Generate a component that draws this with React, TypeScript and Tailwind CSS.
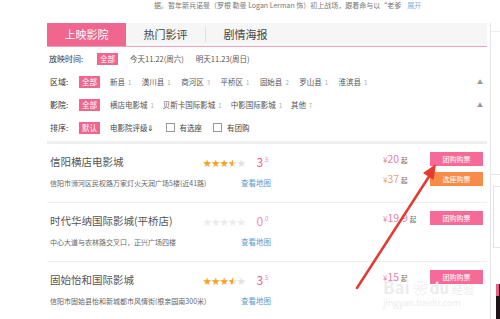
import React from 'react';

interface Price {
  value: string;
  kind: 'group' | 'seat';
}

interface Cinema {
  name: string;
  rating: number;
  score: [string, string];
  address: string;
  prices: Price[];
}

const cinemas: Cinema[] = [
  {
    name: '信阳横店电影城',
    rating: 3.5,
    score: ['3', '.5'],
    address: '信阳市浉河区民权路万家灯火天润广场5楼(近41路)',
    prices: [
      { value: '20', kind: 'group' },
      { value: '37', kind: 'seat' },
    ],
  },
  {
    name: '时代华纳国际影城(平桥店)',
    rating: 0,
    score: ['0', '.0'],
    address: '中心大道与农林路交叉口，正兴广场四楼',
    prices: [{ value: '19.9', kind: 'group' }],
  },
  {
    name: '固始怡和国际影城',
    rating: 3.5,
    score: ['3', '.5'],
    address: '信阳市固始县怡和新城都市风情街(根亲园南300米)',
    prices: [{ value: '15', kind: 'group' }],
  },
];

const areas = [
  ['新县', '1'],
  ['潢川县', '1'],
  ['商河区', '3'],
  ['平桥区', '1'],
  ['固始县', '2'],
  ['罗山县', '1'],
  ['淮滨县', '1'],
];

const brands = [
  ['横店电影城', '1'],
  ['贝斯卡国际影城', '1'],
  ['中影国际影城', '1'],
  ['其他', '7'],
];

const Badge: React.FC<{ text: string }> = ({ text }) => (
  <span className="flex h-[12px] w-[21px] items-center justify-center bg-[#f0668f] text-[7.5px] leading-none text-white">
    {text}
  </span>
);

const Stars: React.FC<{ rating: number }> = ({ rating }) => {
  const empty = rating === 0 ? 'text-[#ececec]' : 'text-[#e2e2e2]';
  return (
    <div className="flex text-[8.5px] leading-none">
      {[0, 1, 2, 3, 4].map((i) => {
        if (rating >= i + 1) {
          return (
            <span key={i} className="text-[#f3a41e]">
              ★
            </span>
          );
        }
        if (rating >= i + 0.5) {
          return (
            <span key={i} className={`relative ${empty}`}>
              ★
              <span className="absolute left-0 top-0 w-1/2 overflow-hidden text-[#f3a41e]">★</span>
            </span>
          );
        }
        return (
          <span key={i} className={empty}>
            ★
          </span>
        );
      })}
    </div>
  );
};

const CinemaRow: React.FC<{ cinema: Cinema; last: boolean }> = ({ cinema, last }) => (
  <div className={`flex h-[59px] pl-[3px] ${last ? '' : 'border-b border-[#eeeeee]'}`}>
    <div className="w-[333px] pt-[11px]">
      <div className="flex h-[14px] items-center">
        <span className="w-[153px] text-[10.5px] leading-none text-[#555]">{cinema.name}</span>
        <Stars rating={cinema.rating} />
        <span className="ml-[11px] flex items-start leading-none text-[#e8608a]">
          <span className={`text-[12px] ${cinema.rating === 0 ? 'text-[#ee8fae]' : ''}`}>{cinema.score[0]}</span>
          <span className="mt-[1px] text-[6px] text-[#ee8fae]">{cinema.score[1]}</span>
        </span>
      </div>
      <div className="mt-[7px] flex h-[14px] items-center">
        <span className="w-[191px] text-[7px] leading-none text-[#666]">{cinema.address}</span>
        <span className="text-[7.5px] leading-none text-[#5c9bd1]">查看地图</span>
      </div>
    </div>
    <div className="flex flex-col gap-[6px] pt-[8px]">
      {cinema.prices.map((p) => (
        <div key={p.value} className="flex h-[14px] items-center">
          <span
            className={`flex w-[47px] items-baseline leading-none ${
              p.kind === 'group' ? 'text-[#e682a3]' : 'text-[#f2a070]'
            }`}
          >
            <span className="text-[8px]">¥</span>
            <span className="text-[10.5px]">{p.value}</span>
            <span className="ml-[2px] text-[6.5px] text-[#666]">起</span>
          </span>
          <span
            className={`flex h-[14px] w-[53px] items-center justify-center text-[7px] leading-none text-white ${
              p.kind === 'group' ? 'bg-[#f66a98]' : 'bg-[#f88b48]'
            }`}
          >
            {p.kind === 'group' ? '团购购票' : '选座购票'}
          </span>
        </div>
      ))}
    </div>
  </div>
);

export default function App() {
  return (
    <div className="relative h-[319px] w-[500px] overflow-hidden bg-white font-['Noto_Sans_CJK_SC','Liberation_Sans',sans-serif]">
      {/* synopsis tail */}
      <div className="flex h-[11px] items-center pl-[154px] text-[7px] leading-none text-[#777]">
        据。暂年新兵诺曼（罗根 勒曼 Logan Lerman 饰）初上战场，跟着命与以“老爹
        <span className="ml-[6px] text-[#7fb0e0]">展开</span>
      </div>

      <div className="mt-[12px] flex">
        <div className="w-[47px]" />
        <div className="w-[440px]">
          {/* tabs */}
          <div className="flex h-[24px] border-b border-[#f0a0b8] bg-[#f6f6f6] text-[11px] leading-none">
            <div className="flex w-[79px] items-center justify-center bg-[#f0668f] text-white">上映影院</div>
            <div className="flex w-[79px] items-center justify-center text-[#444]">热门影评</div>
            <div className="my-[4px] w-px bg-[#e0e0e0]" />
            <div className="flex w-[79px] items-center justify-center text-[#444]">剧情海报</div>
          </div>

          {/* filters */}
          <div className="text-[7.5px] leading-none text-[#555]">
            <div className="flex h-[23px] items-center pl-[2px]">
              <span className="w-[48px] text-[8px] text-[#333]">放映时间:</span>
              <Badge text="全部" />
              <span className="ml-[12px]">今天11.22(周六)</span>
              <span className="ml-[12px]">明天11.23(周日)</span>
            </div>
            <div className="flex h-[23px] items-center pl-[3px] pr-[4px]">
              <span className="w-[29px] text-[8px] text-[#333]">区域:</span>
              <Badge text="全部" />
              <div className="ml-[10px] flex gap-[10.5px]">
                {areas.map(([n, c]) => (
                  <span key={n}>
                    {n}
                    <span className="ml-[3px] text-[6px] text-[#aaa]">{c}</span>
                  </span>
                ))}
              </div>
              <span className="ml-auto text-[6px] text-[#999]">▲</span>
            </div>
            <div className="flex h-[23px] items-center pl-[3px] pr-[4px]">
              <span className="w-[29px] text-[8px] text-[#333]">影院:</span>
              <Badge text="全部" />
              <div className="ml-[10px] flex gap-[9px]">
                {brands.map(([n, c]) => (
                  <span key={n}>
                    {n}
                    <span className="ml-[3px] text-[6px] text-[#aaa]">{c}</span>
                  </span>
                ))}
              </div>
              <span className="ml-auto text-[6px] text-[#999]">▲</span>
            </div>
            <div className="flex h-[23px] items-center pl-[3px]">
              <span className="w-[29px] text-[8px] text-[#333]">排序:</span>
              <Badge text="默认" />
              <span className="ml-[10px] text-[#444]">电影院评级⇓</span>
              <span className="ml-[11px] h-[9px] w-[9px] border border-[#999] bg-white" />
              <span className="ml-[5px] text-[#444]">有选座</span>
              <span className="ml-[11px] h-[9px] w-[9px] border border-[#999] bg-white" />
              <span className="ml-[5px] text-[#444]">有团购</span>
            </div>
          </div>

          <div className="mt-[2px] h-[3px] bg-[#efefef]" />

          {/* cinema list */}
          {cinemas.map((c, i) => (
            <CinemaRow key={c.name} cinema={c} last={i === cinemas.length - 1} />
          ))}
        </div>

        {/* right column edge */}
        <div className="ml-[3px] flex h-[296px] flex-1 flex-col border-l border-[#e4e4e4]">
          <div className="mt-[8px] h-px bg-[#eeeeee]" />
          <div className="mt-[142px] h-px bg-[#e4e4e4]" />
          <div className="mt-[11px] ml-[2px] h-[62px] border-l border-t border-b border-[#e4e4e4]" />
          <div className="mt-auto ml-[5px] h-[35px] bg-[#1c1416]">
            <div className="h-[12px] w-[3px] bg-[#e8608a]" />
          </div>
        </div>
      </div>

      {/* watermark */}
      <div className="absolute left-[383px] top-[278px] leading-none text-[#ececec]">
        <div className="flex items-end">
          <span className="text-[17px] font-bold">Bai</span>
          <span className="ml-[3px] text-[15px]">❀</span>
          <span className="ml-[2px] text-[15px] font-bold">du</span>
          <span className="ml-[3px] text-[11px]">经验</span>
        </div>
        <div className="mt-[3px] text-[9px]">jingyan.baidu.com</div>
      </div>

      {/* annotation arrow */}
      <svg className="pointer-events-none absolute left-0 top-0" width="500" height="319">
        <line x1="357" y1="288" x2="430" y2="175" stroke="#e33b32" strokeWidth="2.5" strokeLinecap="round" />
        <polygon points="436,164 433.5,180 423,173" fill="#e33b32" />
      </svg>
    </div>
  );
}
